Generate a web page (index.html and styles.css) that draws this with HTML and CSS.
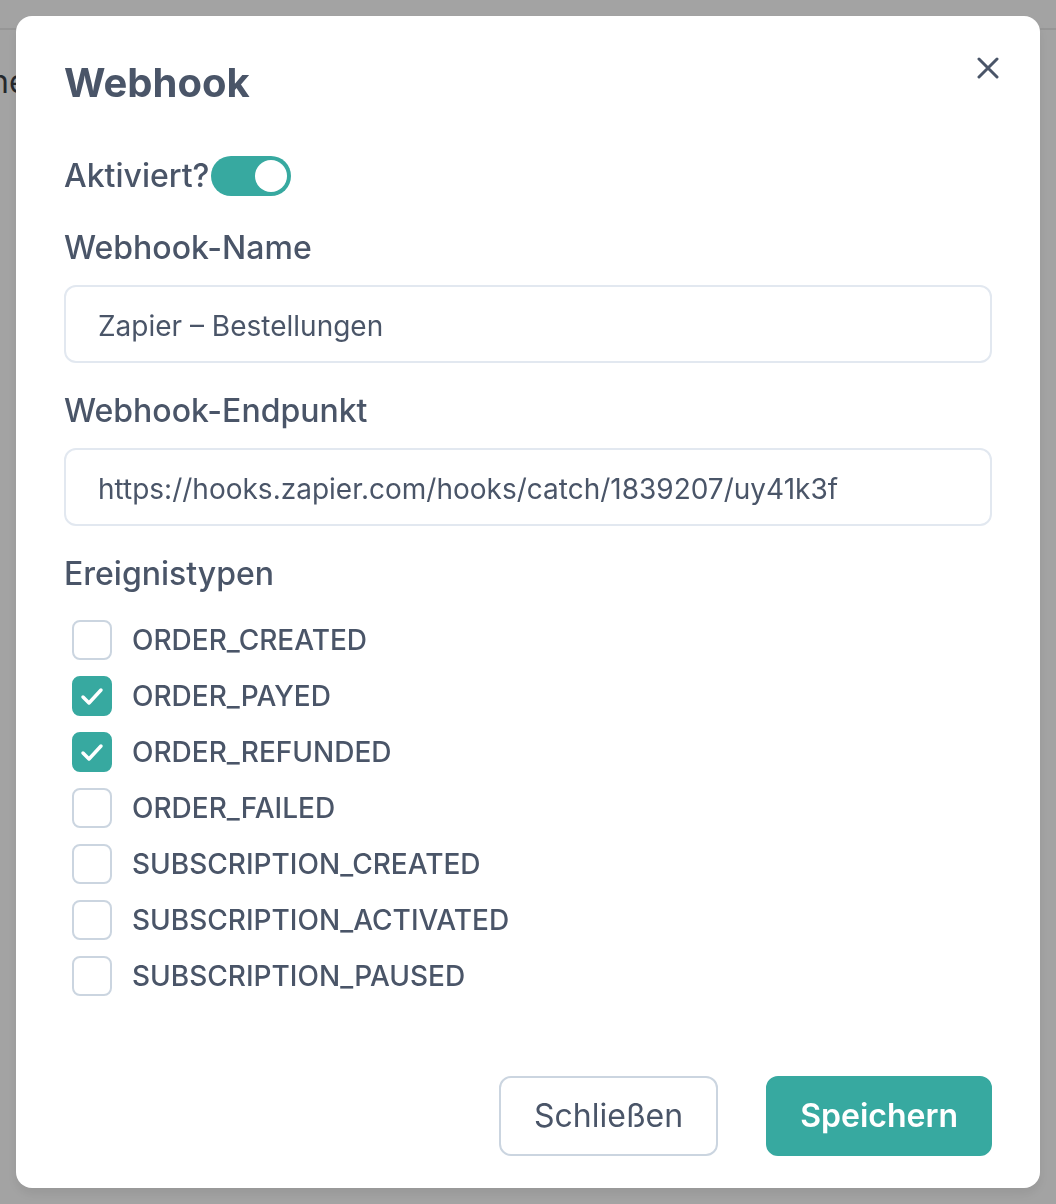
FILE: index.html
```html
<!DOCTYPE html>
<html lang="de">
<head>
    <meta charset="UTF-8">
    <meta name="viewport" content="width=device-width, initial-scale=1.0">
    <title>Webhook</title>
    <link rel="stylesheet" href="styles.css">
</head>
<body>
  <div class="page">
    <div class="page-header"></div>
    <h2 class="page-title">ne</h2>
  </div>

  <div class="overlay">
    <div class="modal">
      <button class="modal-close" aria-label="Schließen">
        <svg width="22" height="22" viewBox="0 0 22 22">
          <path d="M2 2 L20 20 M20 2 L2 20" stroke="#4a5568" stroke-width="3" stroke-linecap="round"/>
        </svg>
      </button>

      <h1 class="modal-title">Webhook</h1>

      <div class="toggle-row">
        <span class="field-label">Aktiviert?</span>
        <span class="toggle toggle-on"><span class="toggle-knob"></span></span>
      </div>

      <label class="field-label">Webhook-Name</label>
      <div class="text-input">Zapier – Bestellungen</div>

      <label class="field-label">Webhook-Endpunkt</label>
      <div class="text-input">https://hooks.zapier.com/hooks/catch/1839207/uy41k3f</div>

      <label class="field-label">Ereignistypen</label>
      <div class="event-list">
        <div class="event-row"><span class="checkbox"></span><span>ORDER_CREATED</span></div>
        <div class="event-row"><span class="checkbox checkbox-checked"><svg width="40" height="40" viewBox="0 0 40 40"><polyline points="11,21 17,27 29,14" fill="none" stroke="#fff" stroke-width="3.5" stroke-linecap="round" stroke-linejoin="round"/></svg></span><span>ORDER_PAYED</span></div>
        <div class="event-row"><span class="checkbox checkbox-checked"><svg width="40" height="40" viewBox="0 0 40 40"><polyline points="11,21 17,27 29,14" fill="none" stroke="#fff" stroke-width="3.5" stroke-linecap="round" stroke-linejoin="round"/></svg></span><span>ORDER_REFUNDED</span></div>
        <div class="event-row"><span class="checkbox"></span><span>ORDER_FAILED</span></div>
        <div class="event-row"><span class="checkbox"></span><span>SUBSCRIPTION_CREATED</span></div>
        <div class="event-row"><span class="checkbox"></span><span>SUBSCRIPTION_ACTIVATED</span></div>
        <div class="event-row"><span class="checkbox"></span><span>SUBSCRIPTION_PAUSED</span></div>
      </div>

      <div class="modal-footer">
        <button class="button button-secondary">Schließen</button>
        <button class="button button-primary">Speichern</button>
      </div>
    </div>
  </div>
</body>
</html>
```

FILE: styles.css
```css
body {
    margin: 0px;
    font-family: Inter, "Noto Sans", sans-serif;
    background-color: #ffffff;
    height: 100vh;
    overflow: hidden;
}

.page-header {
    height: 28px;
    border-bottom: 2px solid #ebebeb;
}

.page-title {
    font-size: 32px;
    font-weight: 400;
    color: #3a3f47;
    margin: 0px;
    margin-top: 28px;
    margin-left: -10px;
    line-height: 48px;
}

.overlay {
    position: fixed;
    inset: 0px;
    background-color: rgba(0, 0, 0, 0.36);
    padding: 16px;
    display: flex;
}

.modal {
    position: relative;
    flex: 1;
    background-color: #ffffff;
    border-radius: 16px;
    padding: 39px 48px 32px 48px;
    box-shadow: 0px 6px 12px rgba(0, 0, 0, 0.08);
    color: #4a5568;
}

.modal-close {
    position: absolute;
    top: 41px;
    right: 41px;
    border: 0px;
    padding: 0px;
    background: none;
    cursor: pointer;
    line-height: 0;
}

.modal-title {
    font-size: 40px;
    font-weight: 700;
    line-height: 56px;
    margin: 0px;
    margin-bottom: 41px;
}

.field-label {
    display: block;
    font-size: 32px;
    font-weight: 500;
    line-height: 48px;
    margin-bottom: 13px;
}

.toggle-row {
    display: flex;
    align-items: center;
    gap: 2px;
    margin-bottom: 24px;
}

.toggle-row .field-label {
    margin-bottom: 0px;
}

.toggle {
    display: flex;
    justify-content: flex-end;
    align-items: center;
    width: 80px;
    height: 40px;
    border-radius: 20px;
    padding: 4px;
    box-sizing: border-box;
    background-color: #cbd5e0;
}

.toggle-on {
    background-color: #37a9a0;
}

.toggle-knob {
    width: 32px;
    height: 32px;
    border-radius: 50%;
    background-color: #ffffff;
}

.text-input {
    font-size: 28px;
    line-height: 42px;
    padding: 18px 32px 14px 32px;
    border: 2px solid #e2e8f0;
    border-radius: 12px;
    margin-bottom: 24px;
}

.event-list {
    display: flex;
    flex-direction: column;
    gap: 16px;
    margin-top: 22px;
    padding-left: 8px;
}

.event-row {
    display: flex;
    align-items: center;
    gap: 20px;
    font-size: 28px;
    font-weight: 500;
    line-height: 40px;
}

.checkbox {
    width: 40px;
    height: 40px;
    box-sizing: border-box;
    border: 2px solid #cbd5e0;
    border-radius: 8px;
    background-color: #ffffff;
    flex-shrink: 0;
    position: relative;
}

.checkbox-checked {
    border-color: #37a9a0;
    background-color: #37a9a0;
}

.checkbox-checked svg {
    position: absolute;
    top: -2px;
    left: -2px;
}

.modal-footer {
    display: flex;
    justify-content: flex-end;
    gap: 48px;
    margin-top: 80px;
}

.button {
    font-family: Inter, "Noto Sans", sans-serif;
    font-size: 32px;
    line-height: 48px;
    padding: 14px 33px;
    border-radius: 12px;
    border: 2px solid transparent;
    cursor: pointer;
}

.button-secondary {
    background-color: #ffffff;
    border-color: #cbd5e0;
    color: #4a5568;
    font-weight: 400;
}

.button-primary {
    padding: 14px 32px;
    background-color: #37a9a0;
    border-color: #37a9a0;
    color: #ffffff;
    font-weight: 600;
}
```
